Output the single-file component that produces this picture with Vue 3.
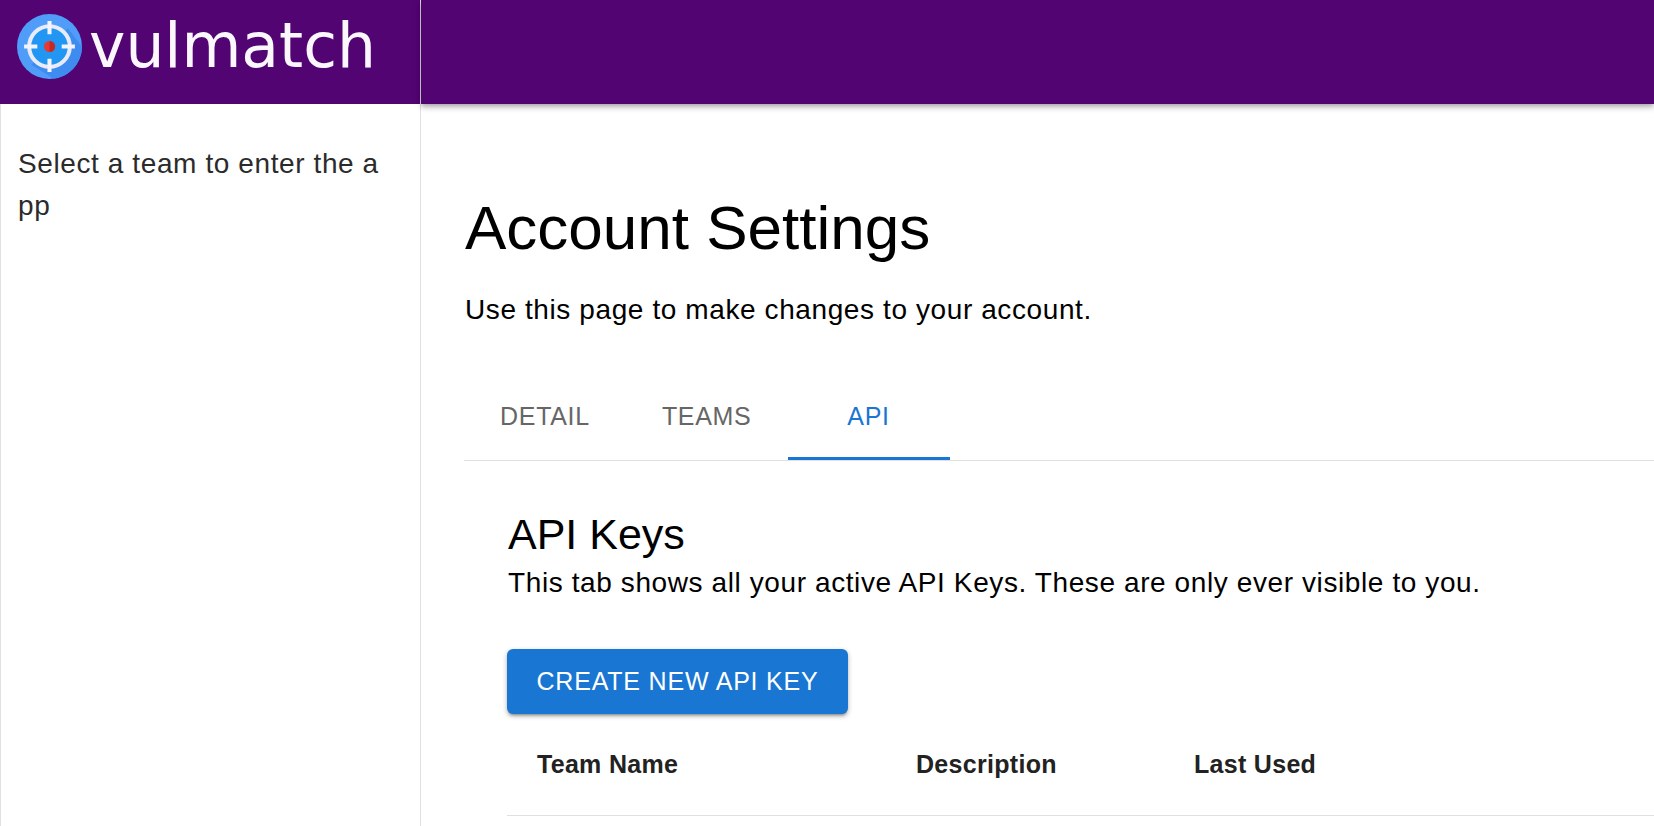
<template>
  <div class="page">
    <aside class="sidebar">
      <div class="brand">
        <svg class="logo-icon" viewBox="0 0 64 64" width="65" height="65">
          <circle cx="32" cy="32" r="32" fill="#4f9df8" />
          <path d="M50 14 L64 32 A32 32 0 0 1 36 63.7 L14 50 Z" fill="#3f8cf0" />
          <circle cx="32" cy="32" r="20" fill="#2196f3" stroke="#e9ecf8" stroke-width="4" />
          <path d="M32 7v13M32 44v13M7 32h13M44 32h13" stroke="#f3f4fb" stroke-width="4" fill="none" />
          <circle cx="32" cy="32" r="5.5" fill="#e53935" />
          <path d="M32 26.5a5.5 5.5 0 0 1 0 11z" fill="#c62828" />
        </svg>
        <span class="logo-text">vulmatch</span>
      </div>
      <p class="team-msg">Select a team to enter the app</p>
    </aside>
    <div class="main">
      <header class="topbar"></header>
      <main class="content">
        <h1>Account Settings</h1>
        <p class="lead">Use this page to make changes to your account.</p>
        <nav class="tabs">
          <button v-for="t in tabs" :key="t" class="tab" :class="{ active: t === 'API' }">{{ t }}</button>
        </nav>
        <section class="panel">
          <h2>API Keys</h2>
          <p class="panel-desc">This tab shows all your active API Keys. These are only ever visible to you.</p>
          <button class="create">CREATE NEW API KEY</button>
          <div class="thead">
            <div class="col-team">Team Name</div>
            <div class="col-desc">Description</div>
            <div class="col-used">Last Used</div>
          </div>
        </section>
      </main>
    </div>
  </div>
</template>

<script setup>
const tabs = ['DETAIL', 'TEAMS', 'API'];
</script>

<style>
html, body {
  margin: 0;
  overflow: hidden;
  background: #fff;
}
</style>

<style scoped>
.page {
  display: flex;
  width: 1654px;
  height: 826px;
  overflow: hidden;
  font-family: "Liberation Sans", Arial, sans-serif;
  color: #000;
}
.sidebar {
  width: 421px;
  flex: none;
  box-sizing: border-box;
  border-left: 1px solid #e0e0e0;
  border-right: 1px solid #e0e0e0;
}
.brand {
  height: 104px;
  margin-left: -1px;
  background: #520473;
  display: flex;
  align-items: center;
  padding-left: 17px;
  padding-bottom: 11px;
  box-sizing: border-box;
  gap: 7px;
}
.logo-icon {
  flex: none;
}
.logo-text {
  font-family: "DejaVu Sans", sans-serif;
  font-size: 61.5px;
  line-height: 1;
  color: #fbf8fd;
}
.team-msg {
  margin: 39px 30px 0 17px;
  font-size: 28px;
  line-height: 42px;
  color: #2b2b2b;
  word-break: break-all;
  letter-spacing: 0.6px;
}
.main {
  flex: 1;
  min-width: 0;
}
.topbar {
  height: 104px;
  background: #520473;
  box-shadow: 0 2px 4px -1px rgba(0, 0, 0, 0.2), 0 4px 5px rgba(0, 0, 0, 0.14), 0 1px 10px rgba(0, 0, 0, 0.12);
}
.content {
  padding: 0 0 0 44px;
  margin-left: -1px;
}
h1 {
  margin: 89px 0 0 1px;
  font-size: 62px;
  font-weight: 400;
  line-height: 70px;
}
.lead {
  margin: 29px 0 0 1px;
  font-size: 28px;
  line-height: 36px;
  letter-spacing: 0.6px;
}
.tabs {
  display: flex;
  margin-top: 45px;
  border-bottom: 1px solid #e0e0e0;
}
.tab {
  border: none;
  background: none;
  font: inherit;
  font-size: 25px;
  color: #666;
  height: 87px;
  padding: 0 36px;
  letter-spacing: 0.7px;
}
.tab.active {
  color: #1976d2;
  box-shadow: inset 0 -3px 0 #1976d2;
  width: 162px;
}
.panel {
  padding: 0 0 0 44px;
}
h2 {
  margin: 50px 0 0;
  font-size: 43px;
  font-weight: 400;
  line-height: 46px;
}
.panel-desc {
  margin: 8px 0 0;
  font-size: 28px;
  line-height: 36px;
  letter-spacing: 0.6px;
}
.create {
  display: block;
  margin: 48px 0 0 -1px;
  width: 341px;
  height: 65px;
  border: none;
  border-radius: 6px;
  background: #1976d2;
  color: #fff;
  font: inherit;
  font-size: 25px;
  letter-spacing: 0.8px;
  box-shadow: 0 3px 3px -2px rgba(0, 0, 0, 0.3), 0 2px 5px rgba(0, 0, 0, 0.3);
}
.thead {
  display: flex;
  height: 102px;
  margin-left: -1px;
  align-items: center;
  font-size: 25px;
  letter-spacing: 0.3px;
  font-weight: 700;
  color: #222;
  border-bottom: 1px solid #e0e0e0;
  box-sizing: border-box;
  padding-left: 30px;
}
.col-team { width: 379px; }
.col-desc { width: 278px; }
</style>
